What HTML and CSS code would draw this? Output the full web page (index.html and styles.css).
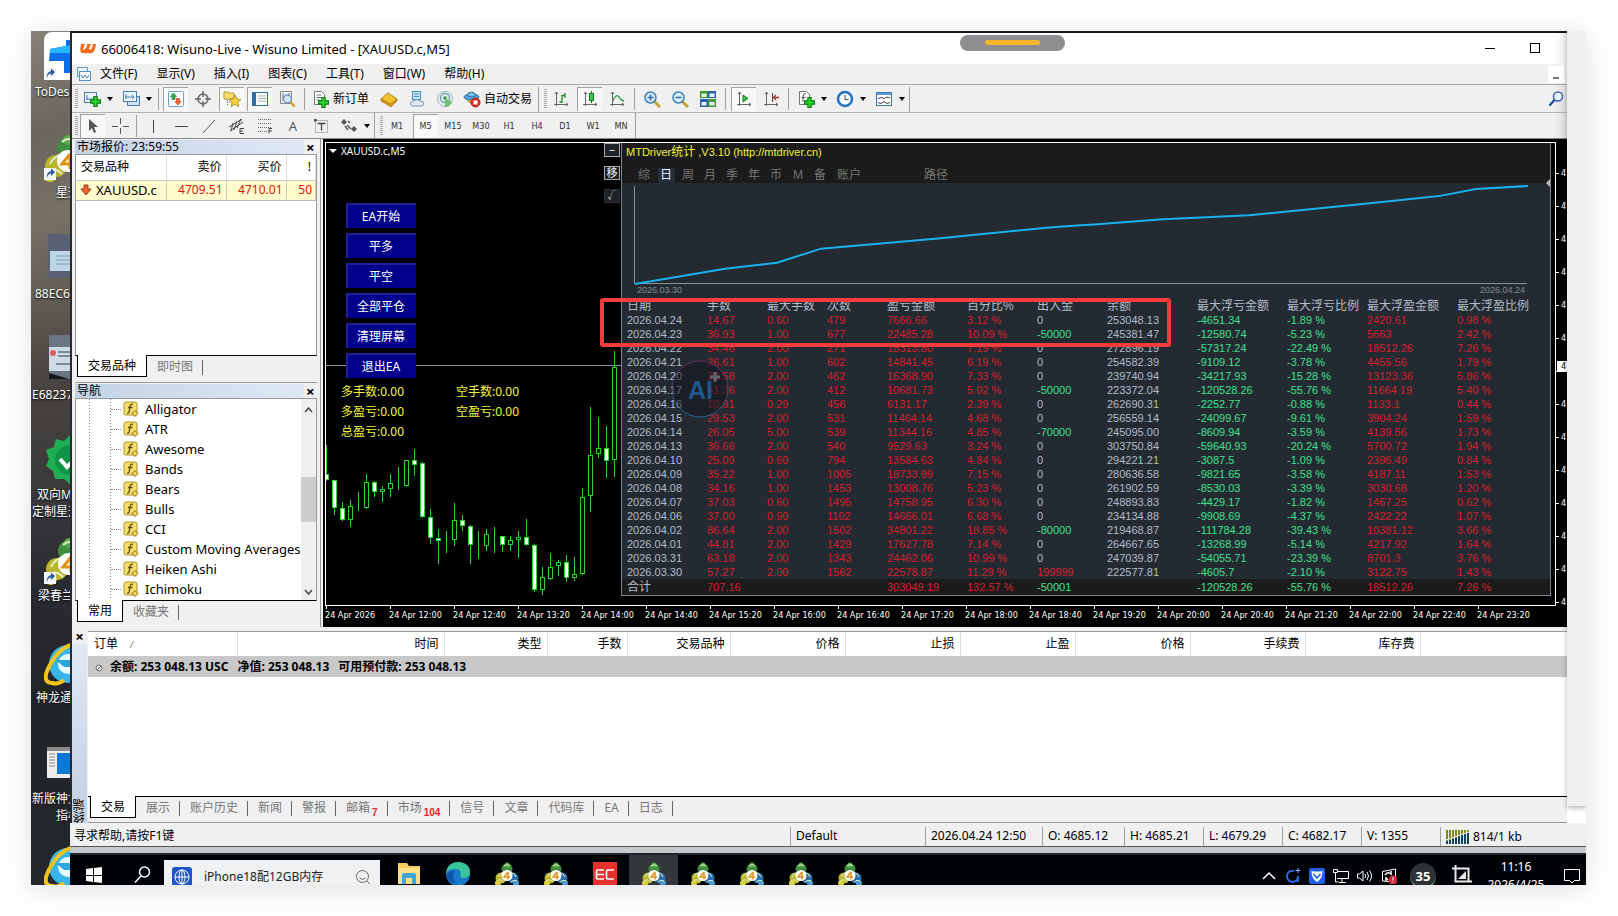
FILE: index.html
```html
<!DOCTYPE html>
<html lang="zh-CN">
<head>
<meta charset="utf-8">
<title>66006418: Wisuno-Live - Wisuno Limited - [XAUUSD.c,M5]</title>
<link rel="stylesheet" href="styles.css">
</head>
<body>
<svg class="defs" aria-hidden="true">
  <symbol id="mt4" viewBox="0 0 24 24">
    <circle cx="12" cy="7" r="5.500" fill="#3f8f3f"/><circle cx="12" cy="3" r="2.500" fill="#5aa850"/>
    <circle cx="6" cy="16" r="5.500" fill="#b9b52c"/><circle cx="3" cy="21" r="3" fill="#d8cf3a"/>
    <circle cx="18" cy="16" r="5.500" fill="#2b6ea8"/><circle cx="21" cy="21" r="3" fill="#4a9bd6"/>
    <path d="M3 15q2-4 6-5M15 10q5 1 6 5M9 4q3-3 6 0M2 19q3-3 7 1M16 20q3-3 6-1" stroke="#dff0c0" fill="none"/>
    <circle cx="12" cy="13.500" r="5.500" fill="#fff"/>
    <path d="M13 10v7.500M13 10l-4 5h6" stroke="#e0921c" stroke-width="1.500" fill="none"/>
  </symbol>
  <symbol id="fx" viewBox="0 0 16 16">
    <rect x="1" y="1" width="13" height="13" rx="2" fill="#f8df6a" stroke="#b0922a"/>
    <path d="M10 3.500q-2-1-2.600 1.200L6 11q-.5 1.500-2 1M5 6.500h4.500" stroke="#5f4a10" fill="none" stroke-width="1.300"/>
    <path d="M12 9.500l3 3-3 3-3-3z" fill="#f5d65a" stroke="#8a6d14"/>
  </symbol>
  <symbol id="ie" viewBox="0 0 46 46">
    <circle cx="24" cy="24" r="19" fill="#38b4e6"/><circle cx="24" cy="24" r="10" fill="#e8f8ff"/>
    <path d="M12 20h30v7H20z" fill="#2ba6dc"/>
    <path d="M36 3Q18 4 7 23T8 43q6 2 12-3" fill="none" stroke="#f3c31b" stroke-width="4"/>
  </symbol>
  <symbol id="shortcut" viewBox="0 0 12 12">
    <rect width="12" height="12" fill="#f4f6f8"/><path d="M3 11q0-5 4-5.500V8l4-4-4-3.500V3Q2 4 3 11" fill="#2a5aa0"/>
  </symbol>
  <symbol id="plus" viewBox="0 0 10 10"><path d="M3.500.5h3v3h3v3h-3v3h-3v-3h-3v-3h3z" fill="#2ad82a" stroke="#0b7a12"/></symbol>
  <symbol id="axes" viewBox="0 0 16 16"><path d="M3.500 1v14M1 13.500h14M2 3l1.500-2L5 3M13 12l2 1.500-2 1.500" stroke="#666" fill="none"/></symbol>
</svg>

<div class="frame">
  <aside class="desktop" aria-label="桌面">
    <svg class="dk dk-1" viewBox="0 0 48 48"><rect width="60" height="48" rx="8" fill="#fff"/><path d="M6 17l16-3V8h26v33H20V29H5z" fill="#0d6fe8"/><path d="M6 17l22-4v8H6z" fill="#27b4ff"/></svg>
    <svg class="dk sc-1"><use href="#shortcut"/></svg><span class="dl dl-1">ToDesk</span>
    <svg class="dk dk-2"><use href="#mt4"/></svg><svg class="dk sc-2"><use href="#shortcut"/></svg><span class="dl dl-2">星迈</span>
    <svg class="dk dk-3" viewBox="0 0 40 44"><rect width="40" height="44" fill="#596073"/><rect x="2" y="17" width="38" height="20" fill="#bcd6e4"/><path d="M8 22h20M8 26h20M8 30h14" stroke="#7f9cb0"/></svg><span class="dl dl-3">88EC6</span>
    <svg class="dk dk-4" viewBox="0 0 40 44"><rect width="40" height="44" fill="#6c7484"/><rect y="12" width="40" height="24" fill="#cfdbe4"/><circle cx="4" cy="18" r="3" fill="#e25b62"/><path d="M9 17h20M9 21h20M7 29h20" stroke="#7e8a98" stroke-width="2"/><path d="M0 38l20 6H0z" fill="#14171c"/></svg><span class="dl dl-4">E68237</span>
    <svg class="dk dk-5" viewBox="0 0 50 50"><path d="M25 0l6 6 8-2 2 8 8 3-2 9 3 7-7 5-1 8-9 0-7 6-7-6-9 0-2-8-7-5 3-7-3-9 8-3 2-8 8 2z" fill="#1fae54"/><circle cx="25" cy="25" r="15" fill="#0d9446"/><path d="M15 24l7 8 13-13" stroke="#fff" stroke-width="4" fill="none"/></svg><span class="dl dl-5">双向MT</span><span class="dl dl-6">定制星迈</span>
    <svg class="dk dk-6"><use href="#mt4"/></svg><svg class="dk sc-6"><use href="#shortcut"/></svg><span class="dl dl-7">梁春兰</span>
    <svg class="dk dk-7"><use href="#ie"/></svg><span class="dl dl-8">神龙通</span>
    <svg class="dk dk-8" viewBox="0 0 40 31"><rect width="40" height="31" fill="#eee"/><rect width="40" height="4" fill="#8a8a8a"/><path d="M2 7h6M2 10h6M2 13h6M2 16h6M2 19h6" stroke="#888"/><rect x="10" y="6" width="30" height="21" fill="#0c78d6"/></svg><span class="dl dl-9">新版神龙</span><span class="dl dl-10">指标</span>
    <svg class="dk dk-9"><use href="#ie"/></svg>
  </aside>

  <div class="screen">
    <div class="upper">
      <main class="window">
        <header class="titlebar">
          <svg width="16" height="11" viewBox="0 0 16 11"><path d="M1 1h4L3 6q1 2 3-1l1.500-4h3.500L9 6q1 2 3-1l1-4h3q-1 8-4 9-3 1-4-.5-2 1.500-4 .5-3 .5-3.500-1.500Q0 7 1 1" fill="#f26a1b"/></svg>
          <h1>66006418: Wisuno-Live - Wisuno Limited - [XAUUSD.c,M5]</h1>
          <div class="pill"><i></i></div>
          <button class="winbtn" aria-label="最小化"><svg width="11" height="11"><path d="M0 5.500h10" stroke="#000"/></svg></button>
          <button class="winbtn" aria-label="最大化"><svg width="11" height="11"><rect x=".5" y=".5" width="9" height="9" fill="none" stroke="#000"/></svg></button>
        </header>
        <nav class="menubar">
          <svg width="14" height="14" viewBox="0 0 14 14"><rect x=".5" y=".5" width="10" height="9" fill="#e8f2fc" stroke="#6f9cc8"/><rect x="2.500" y="4.500" width="11" height="9" fill="#f6faff" stroke="#5c8fc2"/><path d="M4 8l2 3 2-3 2 3 2-3" stroke="#4b86bd" fill="none"/></svg>
          <button>文件(F)</button><button>显示(V)</button><button>插入(I)</button><button>图表(C)</button><button>工具(T)</button><button>窗口(W)</button><button>帮助(H)</button>
          <button class="childmin" aria-label="最小化子窗口"></button>
        </nav>
        <div class="toolbar">
          <i class="grip"></i>
          <button class="tool drop" aria-label="新图表"><svg viewBox="0 0 18 18"><rect x="1.500" y="2.500" width="12" height="10" fill="#e8f2fc" stroke="#4d7fae"/><path d="M4 5v5M3 9h8" stroke="#4d7fae"/><use href="#plus" x="7" y="6" width="11" height="11"/></svg></button>
          <button class="tool drop" aria-label="配置"><svg viewBox="0 0 18 18"><rect x="5.500" y="6.500" width="12" height="9" fill="#cfe2f5" stroke="#4d7fae"/><rect x="1.500" y="1.500" width="13" height="10" fill="#eaf3fc" stroke="#4d7fae"/><path d="M4 4v5M3 7h9M10 5l2 2-2 2" stroke="#4d7fae" fill="none"/></svg></button>
          <i class="sep"></i>
          <button class="tool on" aria-label="市场报价"><svg viewBox="0 0 18 18"><rect x="1.500" y="1.500" width="15" height="15" rx="1" fill="#fff" stroke="#6aa1d4"/><path d="M6.500 3l3 3.500h-1.500v3h-3v-3H3.500z" fill="#35b24a" stroke="#1f7a30" stroke-width=".7"/><path d="M11 15l3-3.500h-1.500v-3h-3v3H8z" fill="#f2663a" stroke="#b33" stroke-width=".7"/></svg></button>
          <button class="tool" aria-label="数据窗口"><svg viewBox="0 0 18 18"><circle cx="9" cy="9" r="5" fill="none" stroke="#666" stroke-width="1.500"/><path d="M9 1v6M9 11v6M1 9h6M11 9h6" stroke="#666" stroke-width="1.500"/></svg></button>
          <button class="tool on" aria-label="导航"><svg viewBox="0 0 18 18"><path d="M1 2h4l1 1h5v6H1z" fill="#f6dd76" stroke="#b6962c"/><path d="M4.500 10v6M6 12h3" stroke="#666" stroke-dasharray="1 1"/><path d="M12 5l1.800 4 4.200.4-3.200 2.800 1 4.300L12 14.200l-3.800 2.300 1-4.300L6 9.400l4.200-.4z" fill="#f7d23c" stroke="#a5831a" stroke-width=".8"/></svg></button>
          <button class="tool on" aria-label="终端"><svg viewBox="0 0 18 18"><rect x="1.500" y="2.500" width="15" height="13" fill="#fff" stroke="#2e6ca8"/><path d="M3.500 3v12" stroke="#2e6ca8" stroke-width="3"/><path d="M7 6h8M7 8.500h8M7 11h8" stroke="#9ab"/></svg></button>
          <button class="tool" aria-label="策略测试"><svg viewBox="0 0 18 18"><path d="M2.500 1.500h11v12h-11z" fill="#f2f2f2" stroke="#888"/><path d="M5 3v8M8 4v6M11 3v6" stroke="#666"/><circle cx="9.500" cy="9" r="4" fill="#cfe4f6" stroke="#5a8cb8"/><path d="M12.500 12l4 4.500" stroke="#c9a227" stroke-width="2.500"/></svg></button>
          <i class="sep"></i>
          <button class="tool wide"><svg viewBox="0 0 18 18"><path d="M2.500 1.500h7l3 3v10h-10z" fill="#fff" stroke="#777"/><path d="M4.500 5h5M4.500 7.500h6M4.500 10h4" stroke="#777"/><use href="#plus" x="6" y="7" width="11" height="11"/></svg>新订单</button>
          <button class="tool" aria-label="MetaEditor"><svg viewBox="0 0 18 18"><path d="M1 9l7-6 9 6-6 6z" fill="#f2c230" stroke="#b07c10"/><path d="M1 9l10 5 6-5v2l-6 6L1 11z" fill="#d89a1c" stroke="#a06c10" stroke-width=".6"/></svg></button>
          <button class="tool" aria-label="社区"><svg viewBox="0 0 18 18"><rect x="4.500" y="1.500" width="8" height="8" fill="#cbe6fa" stroke="#3f92cf"/><path d="M6 4h5M6 6.500h5" stroke="#3f92cf"/><path d="M3 15q-2-3 2-4 4-3 7 0 4 0 4 3 0 2-3 2H5q-2 0-2-1z" fill="#dfeaf5" stroke="#7898b8"/></svg></button>
          <button class="tool" aria-label="信号"><svg viewBox="0 0 18 18"><circle cx="9" cy="9" r="7.500" fill="#e6efe8" stroke="#9bb"/><circle cx="9" cy="8" r="4.500" fill="none" stroke="#6b9ec0" stroke-width="1.300"/><circle cx="9" cy="8" r="1.800" fill="#3a8f3a"/><path d="M9 8v9q5 0 7-5" fill="#6fbf6f"/></svg></button>
          <button class="tool wide"><svg viewBox="0 0 18 18"><path d="M3 8q5 10 11 0z" fill="#f4cc4c" stroke="#a8861c"/><ellipse cx="8.500" cy="7" rx="7.500" ry="3" fill="#5aa7dc" stroke="#2c6f9f"/><path d="M4.500 6q0-4 4-4t4 4q-4 2-8 0" fill="#7cc0ea" stroke="#2c6f9f"/><circle cx="12.500" cy="12.500" r="4.500" fill="#de3222" stroke="#a01c10"/><rect x="10.500" y="10.500" width="4" height="4" fill="#fff"/></svg>自动交易</button>
          <i class="end"></i><i class="grip"></i>
          <button class="tool" aria-label="柱状图"><svg viewBox="0 0 18 18"><use href="#axes" width="16" height="16" x="1" y="1"/><path d="M10 5v8M10 5.500h3M7.500 12h2.500M13 3v5" stroke="#1c8f2c" stroke-width="1.300"/></svg></button>
          <button class="tool on" aria-label="蜡烛图"><svg viewBox="0 0 18 18"><use href="#axes" width="16" height="16" x="1" y="1"/><path d="M10.500 1v12" stroke="#127a22"/><rect x="8.500" y="3.500" width="4" height="7" fill="#2fd043" stroke="#127a22"/></svg></button>
          <button class="tool" aria-label="折线图"><svg viewBox="0 0 18 18"><use href="#axes" width="16" height="16" x="1" y="1"/><path d="M5 11q3-8 6-4t5 4" stroke="#2c9a3c" fill="none" stroke-width="1.300"/></svg></button>
          <i class="sep"></i>
          <button class="tool" aria-label="放大"><svg viewBox="0 0 18 18"><path d="M11 11l6 6" stroke="#caa42c" stroke-width="3"/><circle cx="7.500" cy="7.500" r="5.500" fill="#dff0fc" stroke="#3a7fc0" stroke-width="1.500"/><path d="M4.500 7.500h6M7.500 4.500v6" stroke="#2a6fb0" stroke-width="1.600"/></svg></button>
          <button class="tool" aria-label="缩小"><svg viewBox="0 0 18 18"><path d="M11 11l6 6" stroke="#caa42c" stroke-width="3"/><circle cx="7.500" cy="7.500" r="5.500" fill="#dff0fc" stroke="#3a7fc0" stroke-width="1.500"/><path d="M4.500 7.500h6" stroke="#2a6fb0" stroke-width="1.600"/></svg></button>
          <button class="tool" aria-label="平铺窗口"><svg viewBox="0 0 18 18"><rect x="1" y="1" width="8" height="7" fill="#3f9a34"/><rect x="9" y="1" width="8" height="7" fill="#2b62b8"/><rect x="1" y="9" width="8" height="8" fill="#2b62b8"/><rect x="9" y="9" width="8" height="8" fill="#3f9a34"/><path d="M2.500 3.500h5v3.500h-5zM10.500 3.500h5v3.500h-5zM2.500 12h5v3.500h-5zM10.500 12h5v3.500h-5z" fill="#e8f2ff"/></svg></button>
          <i class="sep"></i>
          <button class="tool on" aria-label="自动滚动"><svg viewBox="0 0 18 18"><use href="#axes" width="16" height="16" x="1" y="1"/><path d="M8 5l5 3.500-5 3.500z" fill="#37c14a" stroke="#177a28"/></svg></button>
          <button class="tool" aria-label="图表平移"><svg viewBox="0 0 18 18"><use href="#axes" width="16" height="16" x="1" y="1"/><path d="M10.500 3v9" stroke="#444"/><path d="M17 7.500h-5M14 5l-2.500 2.500L14 10" stroke="#b8332a" fill="none" stroke-width="1.300"/></svg></button>
          <i class="sep"></i>
          <button class="tool drop" aria-label="指标"><svg viewBox="0 0 18 18"><path d="M2.500 1.500h7l3 3v10h-10z" fill="#fff" stroke="#777"/><path d="M9 4q-3-1-3 2v6M4.500 7.500h4" stroke="#555" fill="none"/><use href="#plus" x="7" y="7" width="11" height="11"/></svg></button>
          <button class="tool drop" aria-label="时间周期"><svg viewBox="0 0 18 18"><circle cx="9" cy="9" r="7" fill="#f6fbff" stroke="#2172c8" stroke-width="2.500"/><path d="M9 5v4.500h3.500" stroke="#444" fill="none"/></svg></button>
          <button class="tool drop" aria-label="模板"><svg viewBox="0 0 18 18"><rect x="1.500" y="2.500" width="15" height="13" fill="#fff" stroke="#3f78b0"/><path d="M2 4h14" stroke="#5c9bd6" stroke-width="2"/><path d="M3 8.500l3-1 3 1 3-1.500 3 1M3 12.500l3 1 3-2 3 2 3-1" stroke="#444" fill="none"/></svg></button>
          <i class="end"></i>
          <button class="tool find" aria-label="搜索"><svg viewBox="0 0 18 18"><circle cx="11" cy="6.500" r="4.500" fill="#eef4ff" stroke="#3d62b8" stroke-width="1.500"/><path d="M7.500 10l-5 5.500" stroke="#2b4f9f" stroke-width="2.500"/></svg></button>
        </div>
        <div class="toolbar lines">
          <i class="grip"></i>
          <button class="tool on" aria-label="光标"><svg viewBox="0 0 18 18"><path d="M5 2v12l3-3 2 5 2-1-2-5h4z" fill="#555"/></svg></button>
          <button class="tool" aria-label="十字线"><svg viewBox="0 0 18 18"><path d="M9.500 1v6M9.500 11v6M1 9.500h6M12 9.500h6" stroke="#555"/></svg></button>
          <i class="sep"></i>
          <button class="tool" aria-label="垂直线"><svg viewBox="0 0 18 18"><path d="M9.500 3v13" stroke="#444"/></svg></button>
          <button class="tool" aria-label="水平线"><svg viewBox="0 0 18 18"><path d="M3 9.500h13" stroke="#444"/></svg></button>
          <button class="tool" aria-label="趋势线"><svg viewBox="0 0 18 18"><path d="M3 16L15 3" stroke="#555"/></svg></button>
          <button class="tool" aria-label="等距通道"><svg viewBox="0 0 18 18"><path d="M1 10L14 2M2 14L15 5M5 6l-2 8M9 4l-3 9M13 2l-4 9" stroke="#444"/><path d="M16 11.500h-4v5h4M12 14h3" stroke="#444" fill="none"/></svg></button>
          <button class="tool" aria-label="斐波那契"><svg viewBox="0 0 18 18"><path d="M2 2.500h14M2 6.500h14M2 10.500h14M2 14.500h9" stroke="#666" stroke-dasharray="1 1"/><path d="M16 11.500h-3v5M13 14h3" stroke="#444" fill="none"/></svg></button>
          <button class="tool letter">A</button>
          <button class="tool" aria-label="文本标签"><svg viewBox="0 0 18 18"><rect x="3.500" y="3.500" width="12" height="12" fill="none" stroke="#777" stroke-dasharray="1 1"/><path d="M5.500 6.500h8M9.500 6.500v7M3 2v3M2 3h3" stroke="#444" stroke-width="1.300"/></svg></button>
          <button class="tool drop" aria-label="箭头"><svg viewBox="0 0 18 18"><path d="M4 2l3 3-3 3-3-3zM14 9l3 3-3 3-3-3z" fill="#555"/><path d="M7 8l4 4M8 4l2 2M5 9l3 4" stroke="#555" stroke-width="1.500"/></svg></button>
          <i class="end"></i><i class="grip"></i>
          <button class="tool tf">M1</button><button class="tool tf on">M5</button><button class="tool tf">M15</button><button class="tool tf">M30</button><button class="tool tf">H1</button><button class="tool tf">H4</button><button class="tool tf">D1</button><button class="tool tf">W1</button><button class="tool tf">MN</button>
          <i class="end"></i>
        </div>

        <div class="workspace">
          <div class="side">
            <section class="dock watch">
              <h2>市场报价: 23:59:55<button aria-label="关闭市场报价">×</button></h2>
              <div class="dockbody">
                <table class="quotes">
                  <thead><tr><th>交易品种</th><th>卖价</th><th>买价</th><th>!</th></tr></thead>
                  <tbody><tr><td><svg width="12" height="12" viewBox="0 0 12 12"><path d="M4 1h4v4h3L6 11 1 5h3z" fill="#f0642c" stroke="#a8331a"/></svg>XAUUSD.c</td><td>4709.51</td><td>4710.01</td><td>50</td></tr></tbody>
                </table>
              </div>
              <div class="tabs"><button class="active">交易品种</button><button>即时图</button></div>
            </section>
            <section class="dock navi">
              <h2>导航<button aria-label="关闭导航">×</button></h2>
              <div class="dockbody tree">
                <ul>
                  <li><svg><use href="#fx"/></svg>Alligator</li><li><svg><use href="#fx"/></svg>ATR</li><li><svg><use href="#fx"/></svg>Awesome</li><li><svg><use href="#fx"/></svg>Bands</li><li><svg><use href="#fx"/></svg>Bears</li><li><svg><use href="#fx"/></svg>Bulls</li><li><svg><use href="#fx"/></svg>CCI</li><li><svg><use href="#fx"/></svg>Custom Moving Averages</li><li><svg><use href="#fx"/></svg>Heiken Ashi</li><li><svg><use href="#fx"/></svg>Ichimoku</li>
                </ul>
                <div class="scroll"><svg width="9" height="6"><path d="M1 5l3.500-4L8 5" stroke="#444" stroke-width="1.500" fill="none"/></svg><i></i><svg width="9" height="6"><path d="M1 1l3.500 4L8 1" stroke="#444" stroke-width="1.500" fill="none"/></svg></div>
              </div>
              <div class="tabs"><button class="active">常用</button><button>收藏夹</button></div>
            </section>
          </div>

          <section class="chart">
            <div class="plot">
              <svg class="candles" id="candles" width="296" height="462"></svg>
              <div class="symbol"><i></i>XAUUSD.c,M5</div>
              <div class="ea">
                <button>EA开始</button><button>平多</button><button>平空</button><button>全部平仓</button><button>清理屏幕</button><button>退出EA</button>
              </div>
              <div class="pos"><span>多手数:0.00</span><span>空手数:0.00</span><span>多盈亏:0.00</span><span>空盈亏:0.00</span><span>总盈亏:0.00</span></div>
              <div class="minis"><button>−</button><button>移</button><button class="dim">√</button></div>
              <div class="stats">
                <div class="statshead">
                  <h3>MTDriver<b>统计</b> ,V3.10 (http://mtdriver.cn)</h3>
                  <div class="periods"><button>综</button><button class="cur">日</button><button>周</button><button>月</button><button>季</button><button>年</button><button>币</button><button>M</button><button>备</button><button class="acct">账户</button><button class="path">路径</button></div>
                </div>
                <svg class="curve" viewBox="0 0 894 100" preserveAspectRatio="none"><path d="M.5 2v96.500H893" stroke="#8a9098" fill="none"/><polyline points="1,99 91,84 143,78 187,64 304,54 415,43 443,41 460,40 529,35 615,31 656,27 736,19 805,12 842,5 894,2" fill="none" stroke="#1ab0ee" stroke-width="2"/></svg>
                <div class="range"><span>2026.03.30</span><span>2026.04.24</span></div>
                <table class="log"><colgroup><col class="c80"><col class="c60"><col class="c60"><col class="c60"><col class="c80"><col class="c70"><col class="c70"><col class="c90"><col class="c90"><col class="c80"><col class="c90"><col></colgroup>
                  <thead><tr><th>日期</th><th>手数</th><th>最大手数</th><th>次数</th><th>盈亏金额</th><th>百分比%</th><th>出入金</th><th>余额</th><th>最大浮亏金额</th><th>最大浮亏比例</th><th>最大浮盈金额</th><th>最大浮盈比例</th></tr></thead>
                  <tbody id="log"></tbody>
                  <tfoot><tr><td>合计</td><td class="r">707.16</td><td></td><td></td><td class="r">303049.19</td><td class="r">132.57 %</td><td class="g">-50001</td><td></td><td class="g">-120528.26</td><td class="g">-55.76 %</td><td class="r">18512.26</td><td class="r">7.26 %</td></tr></tfoot>
                </table>
                <i class="fold"></i>
              </div>
              <svg class="ai" viewBox="0 0 58 58"><defs><linearGradient id="ring" x1="0" y1="0" x2="0" y2="1"><stop offset="0" stop-color="#8a2a7a"/><stop offset="1" stop-color="#2a7fb8"/></linearGradient></defs><circle cx="29" cy="29" r="28" fill="#10141c" fill-opacity=".5" stroke="url(#ring)" stroke-opacity=".7"/><text x="17" y="39" font-family="Liberation Sans" font-weight="700" font-size="25" fill="#1f6cb0" fill-opacity=".75">AI</text><path d="M44 12v10M39 17h10" stroke="#8a93a0" stroke-opacity=".6" stroke-width="3"/></svg>
              <div class="mark"></div>
            </div>
            <div class="yaxis"><span>4</span><span>4</span><span>4</span><span>4</span><span>4</span><span>4</span><span></span><span>4</span><span>4</span><span>4</span><span>4</span><span>4</span><span>4</span><span>4</span><b>4</b></div>
            <div class="xaxis"><span>24 Apr 2026</span><span>24 Apr 12:00</span><span>24 Apr 12:40</span><span>24 Apr 13:20</span><span>24 Apr 14:00</span><span>24 Apr 14:40</span><span>24 Apr 15:20</span><span>24 Apr 16:00</span><span>24 Apr 16:40</span><span>24 Apr 17:20</span><span>24 Apr 18:00</span><span>24 Apr 18:40</span><span>24 Apr 19:20</span><span>24 Apr 20:00</span><span>24 Apr 20:40</span><span>24 Apr 21:20</span><span>24 Apr 22:00</span><span>24 Apr 22:40</span><span>24 Apr 23:20</span></div>
          </section>
        </div>

        <section class="terminal">
          <div class="spine"><button aria-label="关闭终端">×</button><span>终端</span></div>
          <div class="orders">
            <table>
              <colgroup><col class="o1"><col class="o2"><col class="o3"><col class="o4"><col class="o3"><col class="o5"><col class="o5"><col class="o5"><col class="o5"><col class="o5"><col class="o5"><col></colgroup>
              <thead><tr><th>订单<em>/</em></th><th>时间</th><th>类型</th><th>手数</th><th>交易品种</th><th>价格</th><th>止损</th><th>止盈</th><th>价格</th><th>手续费</th><th>库存费</th><th></th></tr></thead>
              <tbody><tr><td colspan="12"><svg width="8" height="8"><circle cx="4" cy="4" r="3" fill="#ddd" stroke="#777"/><path d="M2 6l4-4" stroke="#777"/></svg><span>余额: 253 048.13 USC</span><span>净值: 253 048.13</span><span>可用预付款: 253 048.13</span></td></tr></tbody>
            </table>
            <div class="tabs"><button class="active">交易</button><button>展示</button><button>账户历史</button><button>新闻</button><button>警报</button><button>邮箱<sub>7</sub></button><button>市场<sub>104</sub></button><button>信号</button><button>文章</button><button>代码库</button><button>EA</button><button>日志</button></div>
          </div>
        </section>
      </main>
      <div class="gutter"></div>
    </div>

    <footer class="status"><span class="help">寻求帮助,请按F1键</span><span class="s1">Default</span><span class="s2">2026.04.24 12:50</span><span class="s3">O: 4685.12</span><span class="s4">H: 4685.21</span><span class="s4">L: 4679.29</span><span class="s4">C: 4682.17</span><span class="s4">V: 1355</span><span class="s5"><svg width="23" height="14" viewBox="0 0 23 14"><path d="M1 0v13M4 0v13M7 0v13M10 0v13M13 0v13M16 0v13M19 0v13M22 0v13" stroke="#7d8a14" stroke-width="2"/><path d="M1 11v3M4 10v4M7 9v5M10 8v6M13 6v8M16 5v9M19 4v10M22 3v11" stroke="#0c4466" stroke-width="2"/><path d="M0 10L23 2" stroke="#efefef"/></svg>814/1 kb</span></footer>
    <div class="lip"></div>

    <div class="taskbar">
      <button class="start" aria-label="开始"><svg width="16" height="16"><path d="M0 2l7-1v7H0zM8 1l8-1v8H8zM0 9h7v6l-7-1zM8 9h8v7l-8-1z" fill="#fff"/></svg></button>
      <button class="tsearch" aria-label="搜索"><svg width="17" height="17"><circle cx="10.500" cy="6" r="5" fill="none" stroke="#fff" stroke-width="1.500"/><path d="M7 10l-6 6.500" stroke="#fff" stroke-width="1.500"/></svg></button>
      <div class="query"><svg width="20" height="20"><rect width="20" height="20" rx="3" fill="#1d55c8"/><g fill="none" stroke="#fff"><circle cx="10" cy="10" r="7"/><ellipse cx="10" cy="10" rx="3" ry="7"/><path d="M3 10h14M10 3v14"/></g></svg><input type="text" value="iPhone18配12GB内存" aria-label="搜索内容"><svg width="16" height="16"><circle cx="7.500" cy="7.500" r="6" fill="none" stroke="#666"/><path d="M12 12l3 3M4.500 9q3 3 6 0" stroke="#666" fill="none"/></svg></div>
      <div class="apps">
        <button aria-label="文件资源管理器"><svg viewBox="0 0 24 24"><path d="M1 1h9l2 3h11v18H1z" fill="#f5cf5c"/><path d="M1 6h22v16H1z" fill="#fbe08a"/><path d="M5 22v-9q0-2 2-2h10q2 0 2 2v9h-4v-6H9v6z" fill="#3aa8dc"/></svg></button>
        <button aria-label="Edge"><svg viewBox="0 0 24 24"><circle cx="12" cy="12" r="12" fill="#1779c9"/><path d="M0 12Q1 0 13 0q11 1 11 10 0 6-7 6-4 0-2-4 0-5-6-5-7 0-9 5" fill="#3ac49a"/><path d="M9 9q-5 7 2 13-9-1-11-9 3-5 9-4" fill="#0f56a8"/></svg></button>
        <button aria-label="MetaTrader 1"><svg><use href="#mt4"/></svg></button><button aria-label="MetaTrader 2"><svg><use href="#mt4"/></svg></button>
        <button aria-label="EC"><svg viewBox="0 0 24 24"><rect width="24" height="24" fill="#e5322e"/><path d="M11 8H5q-1.500 0-1.500 1.500v6Q3.500 17 5 17h6M4 12.500h7M21 8h-6q-1.500 0-1.500 1.500v6q0 1.500 1.500 1.500h6" stroke="#fff" stroke-width="1.600" fill="none"/></svg></button>
        <button class="running" aria-label="MetaTrader 3"><svg><use href="#mt4"/></svg></button><button aria-label="MetaTrader 4"><svg><use href="#mt4"/></svg></button><button aria-label="MetaTrader 5"><svg><use href="#mt4"/></svg></button><button aria-label="MetaTrader 6"><svg><use href="#mt4"/></svg></button><button aria-label="MetaTrader 7"><svg><use href="#mt4"/></svg></button>
      </div>
      <div class="tray">
        <svg viewBox="0 0 16 16"><path d="M2 11l6-6 6 6" stroke="#fff" stroke-width="1.500" fill="none"/></svg>
        <svg viewBox="0 0 16 16"><path d="M9 3Q2 2 2 9q1 5 6 5 5-1 5-6v6" stroke="#2a6bea" stroke-width="1.800" fill="none"/><path d="M13 0v5M10.500 2.500h5" stroke="#7fb0ff"/></svg>
        <svg viewBox="0 0 16 16"><rect width="16" height="16" rx="2" fill="#1d5fe6"/><path d="M2.500 3q5.500 1 11 0 0 8-5.500 11-5.500-3-5.500-11" fill="#fff"/><path d="M4.500 6l3.500 4 3.500-4" stroke="#1d5fe6" stroke-width="1.600" fill="none"/></svg>
        <svg viewBox="0 0 16 16"><path d="M5 3.500h10.500v7H4M9 11v3M6 14.500h7M.5 1.500h4v3h-4zM2.500 5v9h3" stroke="#fff" fill="none"/></svg>
        <svg viewBox="0 0 16 16"><path d="M.5 6h2L6 3v10L2.500 10h-2zM8 6q1.500 2 0 4M10 4q3 4 0 8M12.500 2.500q4 5.500 0 11" stroke="#fff" fill="none"/></svg>
        <svg viewBox="0 0 16 16"><path d="M1.500 3.500L14.500 1v13l-13-1z" stroke="#fff" fill="none"/><path d="M4 7q3-4 6-1V3M5 9v3l2-1" stroke="#fff" fill="none" stroke-width="1.500"/><circle cx="12" cy="12" r="4.500" fill="#d8253c"/><path d="M12 9v3.500M12 13.500v1" stroke="#fff"/></svg>
        <span class="temp">35</span>
        <svg class="snip" viewBox="0 0 20 20"><path d="M0 3.500h16.500V17M3.500 0v16.500H20" stroke="#e8e8e8" stroke-width="2" fill="none"/><path d="M14 6v8H6z" fill="#e8e8e8"/></svg>
        <div class="clock"><span>11:16</span><span>2026/4/25</span></div>
        <svg viewBox="0 0 16 16"><path d="M.5 1.500h15v11h-5L8 15l-2.500-2.500h-5z" stroke="#fff" fill="none"/></svg>
      </div>
    </div>
  </div>
</div>
<script src="script.js"></script>
</body>
</html>
```
FILE: script.js
```js
const rows = `2026.04.24|14.67|0.60|479|7666.66|3.12 %|0|253048.13|-4651.34|-1.89 %|2420.61|0.98 %
2026.04.23|36.93|1.00|677|22485.28|10.09 %|-50000|245381.47|-12580.74|-5.23 %|5663|2.42 %
2026.04.22|34.46|2.00|271|18313.80|7.19 %|0|272896.19|-57317.24|-22.49 %|18512.26|7.26 %
2026.04.21|26.61|1.00|602|14841.45|6.19 %|0|254582.39|-9109.12|-3.78 %|4455.56|1.79 %
2026.04.20|23.58|2.00|462|16368.90|7.33 %|0|239740.94|-34217.93|-15.28 %|13123.36|5.86 %
2026.04.17|41.36|2.00|412|10681.73|5.02 %|-50000|223372.04|-120528.26|-55.76 %|11664.19|5.40 %
2026.04.16|10.91|0.29|456|6131.17|2.39 %|0|262690.31|-2252.77|-0.88 %|1133.1|0.44 %
2026.04.15|29.53|2.00|531|11464.14|4.68 %|0|256559.14|-24099.67|-9.61 %|3904.24|1.59 %
2026.04.14|26.05|5.00|539|11344.16|4.85 %|-70000|245095.00|-8609.94|-3.59 %|4139.56|1.73 %
2026.04.13|36.66|2.00|540|9529.63|3.24 %|0|303750.84|-59640.93|-20.24 %|5700.72|1.94 %
2026.04.10|25.09|0.60|794|13584.63|4.84 %|0|294221.21|-3087.5|-1.09 %|2396.49|0.84 %
2026.04.09|35.22|1.00|1005|18733.99|7.15 %|0|280636.58|-9821.65|-3.58 %|4187.11|1.53 %
2026.04.08|34.16|1.00|1453|13008.76|5.23 %|0|261902.59|-8530.03|-3.39 %|3030.68|1.20 %
2026.04.07|37.03|0.60|1495|14758.95|6.30 %|0|248893.83|-4429.17|-1.82 %|1467.25|0.62 %
2026.04.06|37.00|0.90|1102|14666.01|6.68 %|0|234134.88|-9908.69|-4.37 %|2422.22|1.07 %
2026.04.02|86.64|2.00|1502|34801.22|18.85 %|-80000|219468.87|-111784.28|-39.43 %|10381.12|3.66 %
2026.04.01|44.81|2.00|1429|17627.78|7.14 %|0|264667.65|-13268.99|-5.14 %|4217.92|1.64 %
2026.03.31|63.18|2.00|1343|24462.06|10.99 %|0|247039.87|-54055.71|-23.39 %|8701.3|3.76 %
2026.03.30|57.27|2.00|1562|22578.87|11.29 %|199999|222577.81|-4605.7|-2.10 %|3122.75|1.43 %`;

// Gains are red, losses green; dates, balances and zero transfers stay neutral.
function tone(value, column) {
  if (column === 0 || column === 7 || value === '0') return '';
  return value.startsWith('-') ? 'g' : 'r';
}
document.getElementById('log').innerHTML = rows.split('\n').map(line =>
  '<tr>' + line.split('|').map((v, i) => `<td class="${tone(v, i)}">${v}</td>`).join('') + '</tr>').join('');

// high, low, body top, body bottom, kind (0 = down, 1 = up)
const bars = [[302,338,331,337,0],[337,372,337,365,0],[359,378,365,377,0],[357,384,363,377,1],[349,368,363,363,1],
[331,366,339,365,1],[338,354,339,349,0],[343,359,346,349,1],[331,354,340,346,1],[324,347,342,342,1],[317,344,317,343,1],
[306,333,317,322,0],[319,375,320,374,0],[366,401,374,395,0],[386,421,395,398,0],[388,410,398,398,1],[360,403,377,397,1],
[372,388,377,383,0],[382,421,383,402,0],[388,416,403,403,1],[386,408,391,403,1],[384,410,394,394,1],[393,409,393,402,0],
[393,408,397,402,1],[388,415,394,397,1],[376,403,394,402,0],[401,449,402,447,0],[424,452,434,447,1],[410,437,424,436,1],
[417,433,419,423,1],[412,439,419,435,0],[414,438,431,435,1],[345,432,354,431,1],[264,369,312,353,1],[274,315,305,311,1],
[283,335,305,318,0],[208,334,224,317,1],[186,228,224,224,1]];
document.getElementById('candles').innerHTML = '<path d="M0 222.500h296" stroke="#8a949c"/>' + bars.map(([h, l, t, b, up], i) => {
  const x = 1 + i * 8;
  const fill = up ? '#000' : '#fff';
  return `<path d="M${x - 0.5} ${h}V${l}" stroke="#32cd32"/><rect x="${x - 2.5}" y="${t + 0.5}" width="4" height="${Math.max(b - t - 1, 0)}" fill="${fill}" stroke="#32cd32"/>`;
}).join('');
```
FILE: styles.css
```css
* { box-sizing: border-box; }
body { margin: 0; background: #fff; font: 12px/16px "Noto Sans", "Noto Sans CJK SC", sans-serif; color: #000; }
button, input { font: inherit; color: inherit; background: none; border: 0; padding: 0; margin: 0; white-space: nowrap; }
h1, h2, h3, ul { margin: 0; padding: 0; font: inherit; list-style: none; }
svg { flex: none; }
table { border-collapse: collapse; table-layout: fixed; }
th, td { padding: 0; font-weight: 400; text-align: left; white-space: nowrap; }
.defs { position: absolute; width: 0; height: 0; }

.frame { display: flex; height: calc(100vh - 62px); margin: 31px 32px 31px 31px; box-shadow: 0 4px 26px rgba(60, 60, 80, .16); }
.screen { flex: 1; min-width: 0; display: flex; flex-direction: column; }
.upper { flex: 1; min-height: 0; display: flex; }
.window { position: relative; flex: 1; min-width: 0; display: flex; flex-direction: column; background: #f0f0f0; border-top: 2px solid #1a1420; border-left: 2px solid #2a2830; }
.gutter { width: 19px; margin-bottom: 17px; background: #f0f0f0; box-shadow: 0 2px 5px rgba(0, 0, 0, .3); clip-path: inset(0 0 -8px -12px); }

/* desktop icons */
.desktop { position: relative; width: 39px; flex: none; overflow: hidden; background: linear-gradient(160deg, rgba(255, 240, 210, .12), transparent 12%, rgba(255, 240, 210, .14) 22%, transparent 40%), linear-gradient(#77716a, #67625a 15%, #58534c 30%, #47443f 42%, #38373a 56%, #2a2b30 65%, #202328 80%, #24272c); color: #fff; text-shadow: 0 1px 2px #000; }
.dk, .dl { position: absolute; }
.dl { white-space: nowrap; }
.dk-1 { left: 13px; top: 1px; width: 48px; height: 48px; }
.dk-2 { left: 13px; top: 103px; width: 48px; height: 48px; }
.dk-3 { left: 17px; top: 203px; width: 40px; height: 44px; }
.dk-4 { left: 18px; top: 304px; width: 40px; height: 44px; }
.dk-5 { left: 14px; top: 404px; width: 50px; height: 50px; }
.dk-6 { left: 14px; top: 506px; width: 48px; height: 48px; }
.dk-7 { left: 13px; top: 609px; width: 46px; height: 46px; }
.dk-8 { left: 16px; top: 716px; width: 40px; height: 31px; }
.dk-9 { left: 13px; top: 812px; width: 46px; height: 46px; }
.sc-1, .sc-2, .sc-6 { left: 13px; width: 12px; height: 12px; }
.sc-1 { top: 37px; } .sc-2 { top: 137px; } .sc-6 { top: 541px; }
.dl-1 { left: 4px; top: 53px; } .dl-2 { left: 25px; top: 154px; } .dl-3 { left: 4px; top: 255px; }
.dl-4 { left: 1px; top: 356px; } .dl-5 { left: 6px; top: 456px; } .dl-6 { left: 1px; top: 473px; }
.dl-7 { left: 7px; top: 557px; } .dl-8 { left: 5px; top: 659px; } .dl-9 { left: 1px; top: 760px; } .dl-10 { left: 25px; top: 777px; }

/* title and menus */
.titlebar { display: flex; align-items: center; height: 31px; padding-left: 8px; background: linear-gradient(90deg, #fff calc(100% - 14px), #eee); }
.titlebar h1 { margin-left: 5px; line-height: 20px; font-size: 13px; }
.pill { position: absolute; left: 888px; top: 2px; width: 105px; height: 16px; border-radius: 8px; background: #8f8d8f; padding: 5px 25px; }
.pill i { display: block; height: 5px; border-radius: 3px; background: #f5b52c; }
.winbtn { width: 45px; display: flex; justify-content: center; }
.titlebar h1 + .pill + .winbtn { margin-left: auto; }
.titlebar .winbtn:last-child { margin-right: 9px; }
.menubar { display: flex; align-items: center; height: 20px; padding: 0 3px 0 5px; }
.menubar svg { margin-right: 9px; }
.menubar button { margin-right: 19px; }
.menubar .childmin { margin: 0 0 0 auto; width: 16px; height: 17px; background: #fff; }
.childmin::after { content: ""; display: block; width: 6px; height: 2px; margin: 8px auto 0; background: #777; }
.toolbar { display: flex; align-items: center; height: 28px; padding: 1px 3px 0 3px; border-top: 1px solid #a8a8a8; background: linear-gradient(90deg, transparent calc(100% - 14px), #ddd); }
.lines { height: 26px; padding-top: 0; border-top: 1px solid #b4b4b4; }
.grip { width: 3px; height: 20px; background: repeating-linear-gradient(#aaa 0 1px, transparent 1px 2px); }
.sep { width: 1px; height: 22px; margin: 0 2px; background: #a0a0a0; }
.sep ~ .sep { margin: 0 3px; }
.end { width: 1px; height: 25px; margin-right: 5px; background: #a0a0a0; }
.tool { width: 28px; height: 24px; display: flex; align-items: center; justify-content: center; }
.tool svg { width: 18px; height: 18px; }
.tool.on { background: #f8f8f8; box-shadow: inset 1px 1px #a0a0a0; width: 25px; margin: 0 1px 0 2px; }
.tool.drop { width: 39px; justify-content: flex-start; padding-left: 5px; }
.tool.drop::after { content: ""; margin-left: 6px; border: 3px solid transparent; border-top: 4px solid #000; border-bottom: 0; }
.tool.wide { width: auto; padding: 0 6px 0 4px; gap: 3px; }
.tool.find { width: 16px; margin-left: auto; }
.letter { color: #555; font-size: 13px; }
.tf { color: #333; font: 9px/12px "DejaVu Sans Condensed", "DejaVu Sans", sans-serif; }

/* docked panels */
.workspace { flex: 1; min-height: 0; display: flex; border-top: 1px solid #888; }
.side { width: 249px; flex: none; display: flex; flex-direction: column; padding: 1px 3px 0 3px; border-right: 1px solid #999; }
.dock { display: flex; flex-direction: column; }
.watch { height: 243px; border-bottom: 1px solid #999; }
.navi { flex: 1; min-height: 0; }
.dock h2 { display: flex; justify-content: space-between; height: 14px; line-height: 14px; padding-left: 2px; background: linear-gradient(90deg, #c3d2e6, #dfe9f5 calc(100% - 13px), #f0f0f0 calc(100% - 13px)); }
.dock h2 button { width: 11px; font-size: 15px; font-weight: 700; line-height: 14px; text-align: left; }
.navi h2 { margin-top: 1px; }
.dockbody { flex: 1; min-height: 0; background: #fff; border: 1px solid #999; border-bottom: 1px solid #000; }
.quotes { width: 100%; }
.quotes th { height: 25px; border-right: 1px solid #ddd; border-bottom: 1px solid #ccc; text-align: right; padding-right: 4px; }
.quotes th:first-child { width: 90px; text-align: left; padding-left: 5px; }
.quotes th:nth-child(2), .quotes th:nth-child(3) { width: 60px; }
.quotes td { height: 20px; background: #fffbcc; border-right: 1px solid #ccc; border-bottom: 1px solid #bbb; text-align: right; padding-right: 3px; color: #dc1a0a; }
.quotes td:first-child { text-align: left; padding-left: 4px; color: #000; font-size: 13px; }
.quotes td svg { margin-right: 4px; vertical-align: -1px; }
.tabs { display: flex; height: 26px; padding-left: 2px; }
.tabs button { position: relative; height: 22px; padding: 0 10px; color: #777; line-height: 21px; display: flex; }
.tabs button::after { content: ""; position: absolute; right: 0; top: 4px; width: 1px; height: 15px; background: #666; }
.tabs .active { margin-top: -1px; background: #fff; color: #000; border: solid #000; border-width: 0 1px 1px; }
.tabs .active::after { display: none; }
.tree { display: flex; overflow: hidden; }
.tree ul { flex: 1; background: repeating-linear-gradient(#888 0 1px, transparent 1px 3px) 13px 0 / 1px 100% no-repeat, repeating-linear-gradient(#888 0 1px, transparent 1px 3px) 34px 0 / 1px 100% no-repeat; }
.tree li { height: 20px; display: flex; align-items: center; padding-left: 35px; white-space: nowrap; font-size: 13px; }
.tree li::before { content: ""; width: 10px; border-top: 1px dotted #888; margin-right: 2px; }
.tree li svg { width: 16px; height: 16px; margin-right: 6px; }
.scroll { width: 15px; background: #f0f0f0; display: flex; flex-direction: column; align-items: center; padding: 8px 0 5px; }
.scroll i { width: 15px; height: 45px; background: #cdcdcd; margin: 64px 0 auto; }

/* price chart */
.chart { flex: 1; min-width: 0; margin-left: 2px; display: grid; grid-template: 1fr 21px / 1fr 11px; padding: 3px 0 0 2px; background: #000; overflow: hidden; color: #fff; }
.plot { position: relative; border: 1px solid #fff; }
.candles, .symbol, .ea, .pos, .minis, .stats, .ai, .mark { position: absolute; }
.candles { left: 0; top: 0; }
.symbol { left: 3px; top: 0; display: flex; align-items: center; gap: 4px; font-size: 10px; }
.symbol i { border: 4px solid transparent; border-top-color: #fff; border-bottom: 0; }
.ea { left: 20px; top: 60px; display: grid; gap: 5px; }
.ea button { width: 70px; height: 25px; padding-right: 2px; line-height: 22px; background: #00008b; border: solid #20209a; border-width: 2px 0 0 2px; }
.pos { left: 15px; top: 239px; display: grid; grid-template-columns: 115px auto; line-height: 20px; color: #f4f43c; }
.minis { left: 278px; top: 0; width: 16px; display: grid; row-gap: 9px; }
.minis button { height: 14px; line-height: 12px; font-size: 11px; border: 1px solid #aaa; background: #1c2228; }
.minis .dim { border-color: #2a3036; color: #ccc; font-size: 9px; }
.stats { left: 295px; right: 4px; top: 0; background: #242a32; border: 1px solid #77818d; border-top: 0; color: #b2bdc9; font: 11px/14px "Liberation Sans", "Noto Sans CJK SC", sans-serif; }
.statshead { height: 40px; padding: 2px 4px; background: #1b1b1b; }
.stats h3 { color: #f0f03c; line-height: 14px; height: 23px; }
.stats h3 b { font-weight: 400; font-size: 12px; }
.periods { display: flex; color: #777; font-size: 12px; }
.periods button { width: 22px; height: 15px; line-height: 15px; }
.periods button:first-child { margin-left: 7px; }
.periods .cur { background: linear-gradient(#222e3b, #222e3b) center / 17px 15px no-repeat; color: #eef; }
.periods .acct { width: 36px; }
.periods .path { width: 36px; margin-left: 51px; }
.curve { display: block; width: calc(100% - 34px); height: 101px; margin: 1px 0 0 12px; }
.range { display: flex; justify-content: space-between; padding: 0 25px 0 15px; font-size: 9px; line-height: 11px; color: #838a92; }
.log { width: 100%; margin-top: 3px; }
.c60 { width: 60px; } .c70 { width: 70px; } .c80 { width: 80px; } .c90 { width: 90px; }
.log th { font-size: 12px; height: 14px; line-height: 14px; }
.log td { height: 14px; line-height: 14px; }
.log th:first-child, .log td:first-child { padding-left: 5px; }
.log col:first-child { width: 85px; }
.log tfoot td { background: #1b1b1b; height: 16px; }
.log tfoot td:first-child { font-size: 12px; }
.r { color: #d51f2b; }
.g { color: #3fe08c; }
.fold { position: absolute; right: 0; top: 36px; border: 4px solid transparent; border-right-color: #bbb; border-left: 0; }
.ai { left: 345px; top: 217px; width: 58px; height: 58px; }
.mark { left: 274px; top: 155px; width: 571px; height: 49px; border: 4px solid #f43c3c; border-radius: 3px; }
.yaxis { position: relative; padding-top: 15px; overflow: hidden; font: 9px/33px "DejaVu Sans Condensed", sans-serif; }
.yaxis span { display: flex; align-items: center; height: 33px; }
.yaxis span::before { content: ""; width: 3px; height: 1px; background: #fff; margin-right: 2px; }
.yaxis b { position: absolute; left: 1px; top: 219px; padding-left: 4px; width: 10px; background: #fff; color: #000; font-weight: 400; line-height: 11px; }
.xaxis { grid-column: 1 / 3; display: flex; font: 9px/12px "DejaVu Sans Condensed", sans-serif; }
.xaxis span { flex: 0 0 64px; white-space: nowrap; }
.xaxis span::before { content: ""; display: block; width: 1px; height: 3px; margin-left: 1px; background: #fff; }

/* terminal */
.terminal { height: 196px; flex: none; display: flex; padding-top: 4px; }
.spine { width: 15px; margin-right: 1px; display: flex; flex-direction: column; justify-content: space-between; background: linear-gradient(#f0f0f0 13px, #dfe9f5 13px, #c0cfe2); }
.spine button { font-size: 15px; font-weight: 700; line-height: 11px; }
.spine span { writing-mode: vertical-rl; transform: rotate(180deg); line-height: 15px; align-self: center; }
.orders { flex: 1; min-width: 0; display: flex; flex-direction: column; border: 1px solid #999; border-width: 1px 0; background: #fff; }
.orders table { width: 100%; }
.o1 { width: 149px; } .o2 { width: 207px; } .o3 { width: 103px; } .o4 { width: 80px; } .o5 { width: 115px; }
.orders th { height: 24px; text-align: right; padding-right: 5px; border-right: 1px solid #ddd; }
.orders th:first-child { text-align: left; padding-left: 6px; }
.orders th:last-child { border: 0; }
.orders th em { margin-left: 12px; font-size: 9px; color: #777; }
.orders td { height: 21px; background: #c8c8c8; padding-left: 7px; font-weight: 700; }
.orders td svg { margin-right: 7px; vertical-align: -1px; }
.orders td span { margin-right: 9px; }
.orders .tabs { margin-top: auto; background: #f0f0f0; border-top: 1px solid #000; height: 26px; }
.tabs sub { font: 700 10px/12px "Liberation Sans", sans-serif; color: #e8232c; align-self: flex-end; margin-left: 2px; }

/* status */
.status { display: flex; height: 24px; align-items: center; background: #f0f0f0; border-bottom: 1px solid #555; padding: 4px 0 0 4px; white-space: nowrap; }
.status span { border-left: 1px solid #a0a0a0; padding-left: 5px; height: 19px; line-height: 18px; }
.status .help { flex: 1; border: 0; padding: 0; }
.s1 { width: 135px; } .s2 { width: 117px; } .s3 { width: 82px; } .s4 { width: 79px; }
.status .s5 { width: 146px; display: flex; align-items: center; gap: 4px; }
.lip { height: 8px; background: #c6c8ca; border-bottom: 2px solid #20242c; }

/* taskbar */
.taskbar { display: flex; align-items: flex-start; height: 30px; background: #000305; color: #fff; overflow: hidden; }
.start { margin: 12px 0 0 16px; }
.tsearch { margin: 11px 0 0 32px; }
.query { display: flex; align-items: center; width: 216px; height: 35px; margin-left: 13px; padding: 0 9px 0 8px; background: #f0f1f2; margin-top: 5px; color: #222; }
.query svg, .query input { margin-bottom: 2px; }
.query input { flex: 1; min-width: 0; padding-left: 12px; }
.apps { display: flex; }
.apps button { width: 49px; height: 32px; padding-top: 7px; display: flex; justify-content: center; }
.apps svg { width: 24px; height: 24px; }
.apps .running { background: #33363a; }
.apps button:first-child { margin-left: 4px; }
.tray { display: flex; margin-left: auto; padding-right: 6px; }
.tray svg { width: 16px; height: 16px; margin: 13px 8px 0 0; }
.temp { width: 26px; height: 26px; margin: 8px 0 0 5px; border-radius: 50%; background: #2e3236; border-bottom: 2px solid #7cc08a; text-align: center; font: 700 13px/26px "Noto Sans", sans-serif; }
.tray .snip { width: 20px; height: 20px; margin: 10px 0 0 16px; }
.clock { width: 70px; margin: 3px 13px 0 9px; text-align: center; display: grid; line-height: 18px; }
.tray svg:last-child { margin-right: 0; }
```
